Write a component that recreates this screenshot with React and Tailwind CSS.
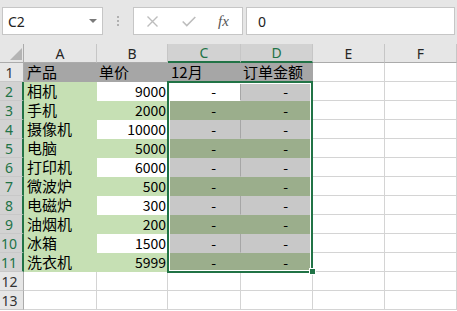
import React from "react";

const names = ["相机", "手机", "摄像机", "电脑", "打印机", "微波炉", "电磁炉", "油烟机", "冰箱", "洗衣机"];
const prices = ["9000", "2000", "10000", "5000", "6000", "500", "300", "200", "1500", "5999"];

function RowHeader({ n, selected }) {
  return (
    <div
      className={
        "w-[24px] h-[19px] shrink-0 flex items-center justify-center pr-[4px] text-[14px] leading-[19px] font-['Noto_Sans',sans-serif] border-b border-[#c8c8c8] " +
        (selected
          ? "bg-[#d2d2d2] text-[#217346] border-r-2 border-r-[#217346]"
          : "bg-[#e6e6e6] text-[#333] border-r border-r-[#ababab]")
      }
    >
      {n}
    </div>
  );
}

function Cell({ w, cls, children }) {
  return (
    <div
      className={
        "h-[19px] shrink-0 border-r border-b whitespace-nowrap leading-[18px] text-black font-['Noto_Sans_CJK_SC',sans-serif] " +
        w +
        " " +
        cls
      }
    >
      {children}
    </div>
  );
}

function EmptyEF() {
  return (
    <>
      <Cell w="w-[72px]" cls="bg-white border-[#d4d4d4]" />
      <Cell w="flex-1" cls="bg-white border-[#d4d4d4]" />
    </>
  );
}

export default function App() {
  return (
    <div className="w-[457px] h-[311px] overflow-hidden bg-white flex flex-col">
      {/* top bar */}
      <div className="h-[44px] shrink-0 bg-[#e6e6e6] flex items-start pt-[7px] pl-[2px]">
        <div className="w-[101px] h-[28px] bg-white border border-[#c6c6c6] flex items-center justify-between pl-[5px] pr-[5px]">
          <span className="text-[14px] text-[#222] font-['Noto_Sans',sans-serif]">C2</span>
          <svg width="8" height="4" viewBox="0 0 8 4">
            <polygon points="0,0 8,0 4,4" fill="#7a7a7a" />
          </svg>
        </div>
        <div className="w-[30px] h-[28px] flex flex-col items-center justify-center gap-[2px]">
          <div className="w-[2px] h-[2px] bg-[#b0b0b0]" />
          <div className="w-[2px] h-[2px] bg-[#b0b0b0]" />
          <div className="w-[2px] h-[2px] bg-[#b0b0b0]" />
        </div>
        <div className="w-[110px] h-[28px] bg-white border border-[#c6c6c6] flex items-center pl-[13px]">
          <svg width="11" height="11" viewBox="0 0 11 11">
            <path d="M0.5 0.5 L10.5 10.5 M10.5 0.5 L0.5 10.5" stroke="#bdbdbd" strokeWidth="1.4" fill="none" />
          </svg>
          <svg width="14" height="11" viewBox="0 0 14 11" className="ml-[24px]">
            <path d="M0.7 5.5 L4.8 9.6 L13.3 1" stroke="#bdbdbd" strokeWidth="1.6" fill="none" />
          </svg>
          <span className="ml-[22px] text-[15px] italic text-[#555] font-['Liberation_Serif',serif] leading-none">fx</span>
        </div>
        <div className="ml-[3px] w-[209px] h-[28px] bg-white border border-[#c6c6c6] flex items-center pl-[11px]">
          <span className="text-[14px] text-[#222] font-['Noto_Sans',sans-serif]">0</span>
        </div>
      </div>

      {/* grid */}
      <div className="relative flex flex-col">
        {/* column header */}
        <div className="flex h-[19px]">
          <div className="w-[24px] h-[19px] shrink-0 bg-[#e6e6e6] border-r border-b border-[#ababab] flex items-end justify-end pr-[1px] pb-[2px]">
            <svg width="12" height="12" viewBox="0 0 12 12">
              <polygon points="12,0 12,12 0,12" fill="#b4b4b4" />
            </svg>
          </div>
          {[
            ["A", "w-[73px]", false],
            ["B", "w-[71px]", false],
            ["C", "w-[73px]", true],
            ["D", "w-[72px]", true],
            ["E", "w-[72px]", false],
            ["F", "flex-1", false],
          ].map(([l, w, sel]) => (
            <div
              key={l}
              className={
                "h-[19px] shrink-0 flex items-center justify-center text-[14px] font-['Noto_Sans',sans-serif] border-r border-r-[#c6c6c6] " +
                w +
                " " +
                (sel
                  ? "bg-[#d2d2d2] text-[#217346] border-b-2 border-b-[#217346]"
                  : "bg-[#e6e6e6] text-[#262626] border-b border-b-[#ababab]")
              }
            >
              {l}
            </div>
          ))}
        </div>

        {/* row 1 */}
        <div className="flex">
          <RowHeader n={1} selected={false} />
          <Cell w="w-[73px]" cls="bg-[#a6a6a6] border-[#a6a6a6] pl-[3px] text-[15px]">产品</Cell>
          <Cell w="w-[71px]" cls="bg-[#a6a6a6] border-[#a6a6a6] pl-[2px] text-[15px]">单价</Cell>
          <Cell w="w-[73px]" cls="bg-[#a6a6a6] border-[#a6a6a6] pl-[3px] text-[15px]">12月</Cell>
          <Cell w="w-[72px]" cls="bg-[#a6a6a6] border-[#a6a6a6] pl-[2px] text-[15px]">订单金额</Cell>
          <EmptyEF />
        </div>

        {names.map((name, k) => {
          const bWhite = k % 2 === 0;
          const cCls =
            k === 0
              ? "bg-white border-b-white border-r-[#a6a6a6]"
              : k % 2 === 1
              ? "bg-[#9bae8c] border-[#9bae8c]"
              : "bg-[#c8c8c8] border-b-[#c8c8c8] border-r-[#a6a6a6]";
          const dCls = k % 2 === 1 ? "bg-[#9bae8c] border-[#9bae8c]" : "bg-[#c8c8c8] border-[#c8c8c8]";
          return (
            <div className="flex" key={name}>
              <RowHeader n={k + 2} selected={true} />
              <Cell w="w-[73px]" cls="bg-[#c6e0b4] border-[#c6e0b4] pl-[3px] text-[15px]">{name}</Cell>
              <Cell
                w="w-[71px]"
                cls={(bWhite ? "bg-white border-white" : "bg-[#c6e0b4] border-[#c6e0b4]") + " text-right pr-[1px] text-[14px]"}
              >
                {prices[k]}
              </Cell>
              <Cell w="w-[73px]" cls={cCls + " text-right pr-[24px] text-[14px]"}>-</Cell>
              <Cell w="w-[72px]" cls={dCls + " text-right pr-[24px] text-[14px]"}>-</Cell>
              <EmptyEF />
            </div>
          );
        })}

        {[12, 13].map((n) => (
          <div className="flex" key={n}>
            <RowHeader n={n} selected={false} />
            <Cell w="w-[73px]" cls="bg-white border-[#d4d4d4]" />
            <Cell w="w-[71px]" cls="bg-white border-[#d4d4d4]" />
            <Cell w="w-[73px]" cls="bg-white border-[#d4d4d4]" />
            <Cell w="w-[72px]" cls="bg-white border-[#d4d4d4]" />
            <EmptyEF />
          </div>
        ))}

        {/* selection overlay */}
        <div className="absolute left-[167px] top-[37px] w-[146px] h-[192px] border-2 border-[#217346] shadow-[inset_0_0_0_1px_white] pointer-events-none" />
        <div className="absolute left-[309px] top-[224px] w-[7px] h-[7px] bg-[#217346] border border-white" />
      </div>
    </div>
  );
}
